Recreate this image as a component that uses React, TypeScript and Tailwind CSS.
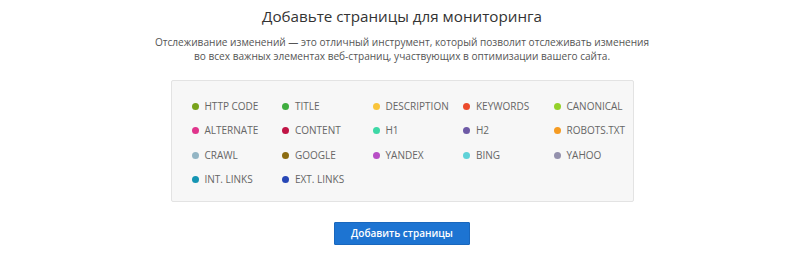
import React from "react";

const items: [string, string][] = [
  ["HTTP CODE", "#78a31b"],
  ["TITLE", "#3fae3f"],
  ["DESCRIPTION", "#f9c43a"],
  ["KEYWORDS", "#ec4b2c"],
  ["CANONICAL", "#94d12a"],
  ["ALTERNATE", "#e0358c"],
  ["CONTENT", "#c01445"],
  ["H1", "#3ed8a6"],
  ["H2", "#6e5aa6"],
  ["ROBOTS.TXT", "#f59b22"],
  ["CRAWL", "#93b5c4"],
  ["GOOGLE", "#8c6c12"],
  ["YANDEX", "#b84fc6"],
  ["BING", "#5fd2d8"],
  ["YAHOO", "#9491ad"],
  ["INT. LINKS", "#1595b3"],
  ["EXT. LINKS", "#2747b6"],
];

export default function App() {
  return (
    <div
      className="w-[800px] h-[259px] bg-white flex flex-col items-center pl-[4px]"
      style={{ fontFamily: '"Open Sans", "Noto Sans", sans-serif' }}
    >
      <h1 className="mt-[5px] text-[15.2px] leading-[22px] text-[#333]">
        Добавьте страницы для мониторинга
      </h1>
      <p className="mt-[8px] text-[10.1px] leading-[14px] text-[#555] text-center">
        Отслеживание изменений — это отличный инструмент, который позволит отслеживать изменения
        <br />
        во всех важных элементах веб-страниц, участвующих в оптимизации вашего сайта.
      </p>
      <div className="mt-[17px] w-[463px] h-[122px] border border-[#e3e3e3] bg-[#f7f7f7] rounded-[2px] pl-[20px] pt-[17px]">
        <div className="grid grid-cols-[90.5px_90.5px_90.5px_90.5px_90.5px] gap-y-[8.5px]">
          {items.map(([label, color]) => (
            <div key={label} className="flex items-center h-[16px]">
              <span
                className="w-[7px] h-[7px] rounded-full mr-[6px] shrink-0"
                style={{ backgroundColor: color }}
              />
              <span className="text-[10px] text-[#666]">{label}</span>
            </div>
          ))}
        </div>
      </div>
      <button className="mt-[20px] w-[136px] h-[23px] bg-[#1d74d2] text-white text-[10px] font-semibold rounded-[1px] border border-[#1967bd]">
        Добавить страницы
      </button>
    </div>
  );
}
